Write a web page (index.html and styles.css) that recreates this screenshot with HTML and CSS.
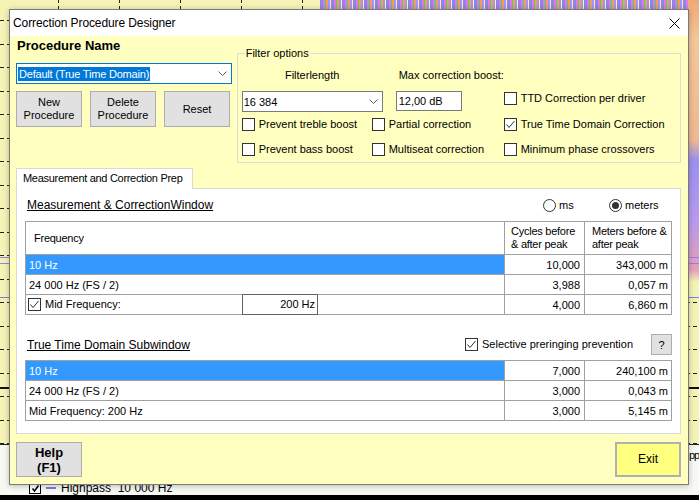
FILE: index.html
```html
<!DOCTYPE html>
<html>
<head>
<meta charset="utf-8">
<title>Correction Procedure Designer</title>
<link rel="stylesheet" href="styles.css">
</head>
<body>
<div class="desktop">
  <div class="bg-grid"></div>
  <div class="bg-vgrid"></div>
  <div class="bg-noise"></div>
  <div class="bg-right"></div>
  <div class="bg-curve c1"></div>
  <div class="bg-curve c2"></div>
  <div class="bg-curve c3"></div>
  <div class="bg-axis"></div>
  <div class="bg-legend"></div>
  <div class="legend-item">
    <span class="lg-box"><svg width="9" height="9" viewBox="0 0 9 9"><path d="M1.5 4.5 L3.5 7 L7.5 1.5" fill="none" stroke="#000" stroke-width="1.6"/></svg></span>
    <span class="lg-dash"></span>
    <span class="lg-text">Highpass&nbsp; 10 000 Hz</span>
  </div>
  <div class="legend-pp">pp</div>
  <div class="bg-black"></div>

  <div class="dialog">
    <div class="titlebar">
      <span class="title">Correction Procedure Designer</span>
      <svg class="close" width="11" height="11" viewBox="0 0 11 11"><path d="M0.5 0.5 L10.5 10.5 M10.5 0.5 L0.5 10.5" stroke="#000" stroke-width="1"/></svg>
    </div>
    <div class="dbody">
      <div class="top">
        <div class="leftcol">
          <div class="pname">Procedure Name</div>
          <div class="combo focus">
            <span class="seltext">Default (True Time Domain)</span>
            <svg class="chev" width="9" height="5" viewBox="0 0 9 5"><path d="M0.5 0.5 L4.5 4.5 L8.5 0.5" fill="none" stroke="#606060"/></svg>
          </div>
          <div class="btnrow">
            <button class="btn">New<br>Procedure</button>
            <button class="btn">Delete<br>Procedure</button>
            <button class="btn">Reset</button>
          </div>
        </div>
        <div class="group">
          <span class="legend">Filter options</span>
          <div class="glabels">
            <span class="lbl-fl">Filterlength</span>
            <span class="lbl-max">Max correction boost:</span>
          </div>
          <div class="grow1">
            <div class="combo fl">
              <span>16 384</span>
              <svg class="chev" width="9" height="5" viewBox="0 0 9 5"><path d="M0.5 0.5 L4.5 4.5 L8.5 0.5" fill="none" stroke="#606060"/></svg>
            </div>
            <div class="tbox">12,00 dB</div>
            <span class="cb low"><span class="box"></span><span>TTD Correction per driver</span></span>
          </div>
          <div class="grow2">
            <span class="cb c1w"><span class="box"></span><span>Prevent treble boost</span></span>
            <span class="cb c2w"><span class="box"></span><span>Partial correction</span></span>
            <span class="cb low"><span class="box"><svg width="11" height="11" viewBox="0 0 11 11"><path d="M1.5 5.5 L4 8.5 L9.5 2" fill="none" stroke="#333"/></svg></span><span>True Time Domain Correction</span></span>
          </div>
          <div class="grow3">
            <span class="cb c1w"><span class="box"></span><span>Prevent bass boost</span></span>
            <span class="cb c2w"><span class="box"></span><span>Multiseat correction</span></span>
            <span class="cb low"><span class="box"></span><span>Minimum phase crossovers</span></span>
          </div>
        </div>
      </div>

      <div class="tabs"><div class="tab">Measurement and Correction Prep</div></div>
      <div class="page">
        <div class="hrow1">
          <span class="htext">Measurement &amp; CorrectionWindow</span>
          <div class="radios">
            <span class="radio r-ms"><span class="rc"></span><span>ms</span></span>
            <span class="radio"><span class="rc on"></span><span>meters</span></span>
          </div>
        </div>
        <div class="tbl tbl1">
          <div class="cell hdr h-freq">Frequency</div>
          <div class="cell hdr h-cyc">Cycles before<br>&amp; after peak</div>
          <div class="cell hdr h-met">Meters before &amp;<br>after peak</div>

          <div class="cell sel">10 Hz</div>
          <div class="cell num">10,000</div>
          <div class="cell num n3">343,000 m</div>

          <div class="cell">24 000 Hz (FS / 2)</div>
          <div class="cell num">3,988</div>
          <div class="cell num n3">0,057 m</div>

          <div class="cell mid">
            <span class="cb midcb"><span class="box"><svg width="11" height="11" viewBox="0 0 11 11"><path d="M1.5 5.5 L4 8.5 L9.5 2" fill="none" stroke="#333"/></svg></span><span>Mid Frequency:</span></span>
            <span class="tbox2">200 Hz</span>
          </div>
          <div class="cell num">4,000</div>
          <div class="cell num n3">6,860 m</div>
        </div>

        <div class="hrow2">
          <span class="htext">True Time Domain Subwindow</span>
          <span class="cb selcb"><span class="box"><svg width="11" height="11" viewBox="0 0 11 11"><path d="M1.5 5.5 L4 8.5 L9.5 2" fill="none" stroke="#333"/></svg></span><span>Selective preringing prevention</span></span>
          <button class="qbtn">?</button>
        </div>
        <div class="tbl tbl2">
          <div class="cell sel">10 Hz</div>
          <div class="cell num">7,000</div>
          <div class="cell num n3">240,100 m</div>

          <div class="cell">24 000 Hz (FS / 2)</div>
          <div class="cell num">3,000</div>
          <div class="cell num n3">0,043 m</div>

          <div class="cell">Mid Frequency: 200 Hz</div>
          <div class="cell num">3,000</div>
          <div class="cell num n3">5,145 m</div>
        </div>
      </div>

      <div class="footer">
        <button class="btn help">Help<br>(F1)</button>
        <button class="btn exit">Exit</button>
      </div>
    </div>
  </div>
</div>
</body>
</html>
```

FILE: styles.css
```css
* { box-sizing: border-box; }

body {
  margin: 0;
  font-family: "Liberation Sans", Arial, sans-serif;
  font-size: 11px;
  color: #000;
}

/* ---------- background application (behind the dialog) ---------- */
.desktop {
  position: relative;
  width: 699px;
  height: 500px;
  overflow: hidden;
  background: #f6f3b6;
}

.bg-grid {
  position: absolute;
  left: 0; top: 0;
  width: 699px; height: 444px;
  background: repeating-linear-gradient(to bottom, transparent 0 20px, #222 20px 21px, transparent 21px 23.5px);
  -webkit-mask-image: repeating-linear-gradient(to right, #000 0 4px, transparent 4px 7px);
  mask-image: repeating-linear-gradient(to right, #000 0 4px, transparent 4px 7px);
}

.bg-vgrid {
  position: absolute;
  left: 0; top: 0;
  width: 699px; height: 444px;
  background: repeating-linear-gradient(to right, transparent 0 58px, #222 58px 59px, transparent 59px 61px);
  -webkit-mask-image: repeating-linear-gradient(to bottom, #000 0 3px, transparent 3px 6px);
  mask-image: repeating-linear-gradient(to bottom, #000 0 3px, transparent 3px 6px);
}

.bg-noise {
  position: absolute;
  left: 320px; top: 0;
  width: 379px; height: 10px;
  background:
    repeating-linear-gradient(90deg, #8f84ee 0 3px, #e07ae6 3px 5px, #4fd84f 5px 6px, #f09c68 6px 8px, #a894f0 8px 10px, #f6f3b6 10px 11px);
}

.bg-right {
  position: absolute;
  left: 688px; top: 0;
  width: 11px; height: 282px;
  background: linear-gradient(to bottom, #f0a878 0, #f4c89a 40px, #f0b890 140px, #9a90f0 160px, #b89af0 220px, #e6a0b8 270px, #f6f3b6 282px);
}

.bg-curve {
  position: absolute;
  left: 0;
  width: 699px;
  height: 1px;
  background: #8c84e8;
}
.bg-curve.c1 { top: 257px; }
.bg-curve.c2 { top: 263px; }
.bg-curve.c3 { top: 297px; background: #7b7be6; }

.bg-axis {
  position: absolute;
  left: 0; top: 387px;
  width: 699px; height: 2px;
  background: #111;
}

.bg-legend {
  position: absolute;
  left: 0; top: 444px;
  width: 699px; height: 52px;
  background: #f9f9f4;
  border-top: 1px solid #222;
}

.legend-item {
  position: absolute;
  left: 29px; top: 481px;
  display: flex;
  align-items: center;
  gap: 5px;
  font-size: 12px;
  line-height: 14px;
  color: #000;
}
.lg-box {
  width: 12px; height: 12px;
  border: 1px solid #000;
  background: #fff;
  display: flex; align-items: center; justify-content: center;
}
.lg-dash { width: 10px; height: 2px; background: #7b7be6; }

.legend-pp {
  position: absolute;
  left: 689px; top: 448px;
  font-size: 11px;
  line-height: 14px;
  letter-spacing: -1px;
}

.bg-black {
  position: absolute;
  left: 0; top: 495px;
  width: 699px; height: 5px;
  background: #000;
}

/* ---------- dialog window ---------- */
.dialog {
  position: absolute;
  left: 9px; top: 9px;
  width: 680px; height: 476px;
  border: 1px solid #7a7a7a;
  background: #ffffc0;
  box-shadow: 0 1px 6px rgba(0,0,0,0.25);
  display: flex;
  flex-direction: column;
}

.titlebar {
  flex: none;
  height: 26px;
  background: #fff;
  display: flex;
  align-items: center;
  padding-left: 3px;
}
.title { font-size: 12px; letter-spacing: -0.1px; }
.close { margin-left: auto; margin-right: 8px; }

.dbody {
  flex: 1;
  padding: 2px 7px 0 6px;
  display: flex;
  flex-direction: column;
}

.top { display: flex; height: 125px; }

.leftcol { width: 216px; }

.pname {
  font-size: 13px;
  font-weight: bold;
  line-height: 16px;
  padding-left: 1px;
}

.combo {
  height: 21px;
  border: 1px solid #7a7a7a;
  background: #fff;
  display: flex;
  align-items: center;
  padding-left: 1px;
}
.combo.focus {
  border-color: #0078d7;
  margin-top: 9px;
}
.seltext {
  background: #0078d7;
  color: #fff;
  line-height: 14px;
  padding: 0 1px;
  letter-spacing: -0.2px;
}
.chev { margin-left: auto; margin-right: 4px; flex: none; }

.btnrow { display: flex; gap: 8px; margin-top: 7px; }

.btn {
  width: 66px;
  height: 36px;
  padding: 0;
  background: #e1e1e1;
  border: 1px solid #adadad;
  font-family: inherit;
  font-size: 11px;
  line-height: 13px;
  color: #000;
}

/* filter options group */
.group {
  position: relative;
  margin-left: 5px;
  margin-top: 15px;
  width: 445px;
  height: 110px;
  border: 1px solid #dcdcdc;
  padding: 15px 0 0 4px;
}
.legend {
  position: absolute;
  left: 7px; top: -8px;
  background: #ffffc0;
  padding: 0 1px;
  line-height: 14px;
}

.glabels { display: flex; height: 13px; line-height: 13px; }
.lbl-fl { width: 154px; padding-right: 13px; text-align: center; }
.lbl-max { padding-left: 3px; }

.grow1 { display: flex; align-items: flex-start; margin-top: 9px; }
.combo.fl { width: 141px; margin-right: 13px; }
.tbox {
  width: 66px;
  height: 20px;
  border: 1px solid #7a7a7a;
  background: #fff;
  padding-left: 2px;
  line-height: 18px;
  margin-right: 42px;
}

.grow2 { display: flex; margin-top: 5px; }
.grow3 { display: flex; margin-top: 11px; }
.c1w { width: 130px; }
.c2w { width: 132px; }
.low { margin-top: 1px; }

.cb {
  display: inline-flex;
  align-items: center;
  gap: 4px;
  line-height: 13px;
  white-space: nowrap;
}
.box {
  flex: none;
  width: 13px; height: 13px;
  border: 1px solid #333;
  background: #fff;
  display: flex;
}

/* tab control */
.tabs {
  position: relative;
  z-index: 1;
  display: flex;
  margin-top: 5px;
}
.tab {
  width: 177px;
  height: 21px;
  margin-bottom: -1px;
  background: #fff;
  border: 1px solid #d9d9d9;
  border-bottom: none;
  padding-left: 6px;
  line-height: 19px;
  letter-spacing: -0.3px;
  white-space: nowrap;
}

.page {
  width: 665px;
  height: 246px;
  background: #fff;
  border: 1px solid #d9d9d9;
  padding: 8px 8px 0 8px;
}

.hrow1 { display: flex; align-items: center; height: 16px; }
.htext {
  font-size: 12px;
  text-decoration: underline;
  padding-left: 2px;
}
.radios {
  display: flex;
  margin-left: auto;
  margin-right: 12px;
  width: 117px;
}
.radio { display: flex; align-items: center; gap: 3px; }
.r-ms { width: 66px; }
.rc {
  width: 13px; height: 13px;
  border: 1px solid #333;
  border-radius: 50%;
  background: #fff;
  display: flex;
  align-items: center;
  justify-content: center;
}
.rc.on::after {
  content: "";
  width: 7px; height: 7px;
  border-radius: 50%;
  background: #333;
}

.tbl {
  display: grid;
  grid-template-columns: 479px 80px 87px;
  border-top: 1px solid #a0a0a0;
  border-left: 1px solid #a0a0a0;
  background: #fff;
  width: 647px;
}
.tbl1 { grid-template-rows: 33px 20px 20px 20px; margin-top: 8px; }
.tbl2 { grid-template-rows: 20px 20px 20px; margin-top: 5px; }

.cell {
  border-right: 1px solid #a0a0a0;
  border-bottom: 1px solid #a0a0a0;
  display: flex;
  align-items: center;
  padding-left: 3px;
  white-space: nowrap;
}
.hdr { line-height: 13px; letter-spacing: -0.25px; }
.h-freq { padding-left: 8px; }
.h-cyc { padding-left: 6px; }
.h-met { padding-left: 7px; }
.num { justify-content: flex-end; padding-left: 0; padding-right: 4px; }
.num.n3 { padding-right: 3px; }
.sel { background: #3399ff; color: #fff; }

.mid { padding-left: 2px; }
.midcb { width: 214px; }
.tbox2 {
  flex: none;
  width: 76px;
  height: 21px;
  border: 1px solid #646464;
  background: #fff;
  text-align: right;
  padding-right: 2px;
  line-height: 19px;
}

.hrow2 { display: flex; align-items: center; height: 21px; margin-top: 19px; }
.selcb { margin-left: auto; width: 186px; }
.qbtn {
  width: 21px; height: 21px;
  padding: 0;
  background: #e1e1e1;
  border: 1px solid #adadad;
  font-family: inherit;
  font-size: 11px;
  color: #000;
}

.footer {
  display: flex;
  justify-content: space-between;
  margin-top: 8px;
}
.btn.help {
  height: 35px;
  font-weight: bold;
  font-size: 13px;
  line-height: 15px;
}
.btn.exit {
  height: 35px;
  background: #ffff80;
  border: 2px solid #b0b0b0;
  font-size: 12px;
}
```
